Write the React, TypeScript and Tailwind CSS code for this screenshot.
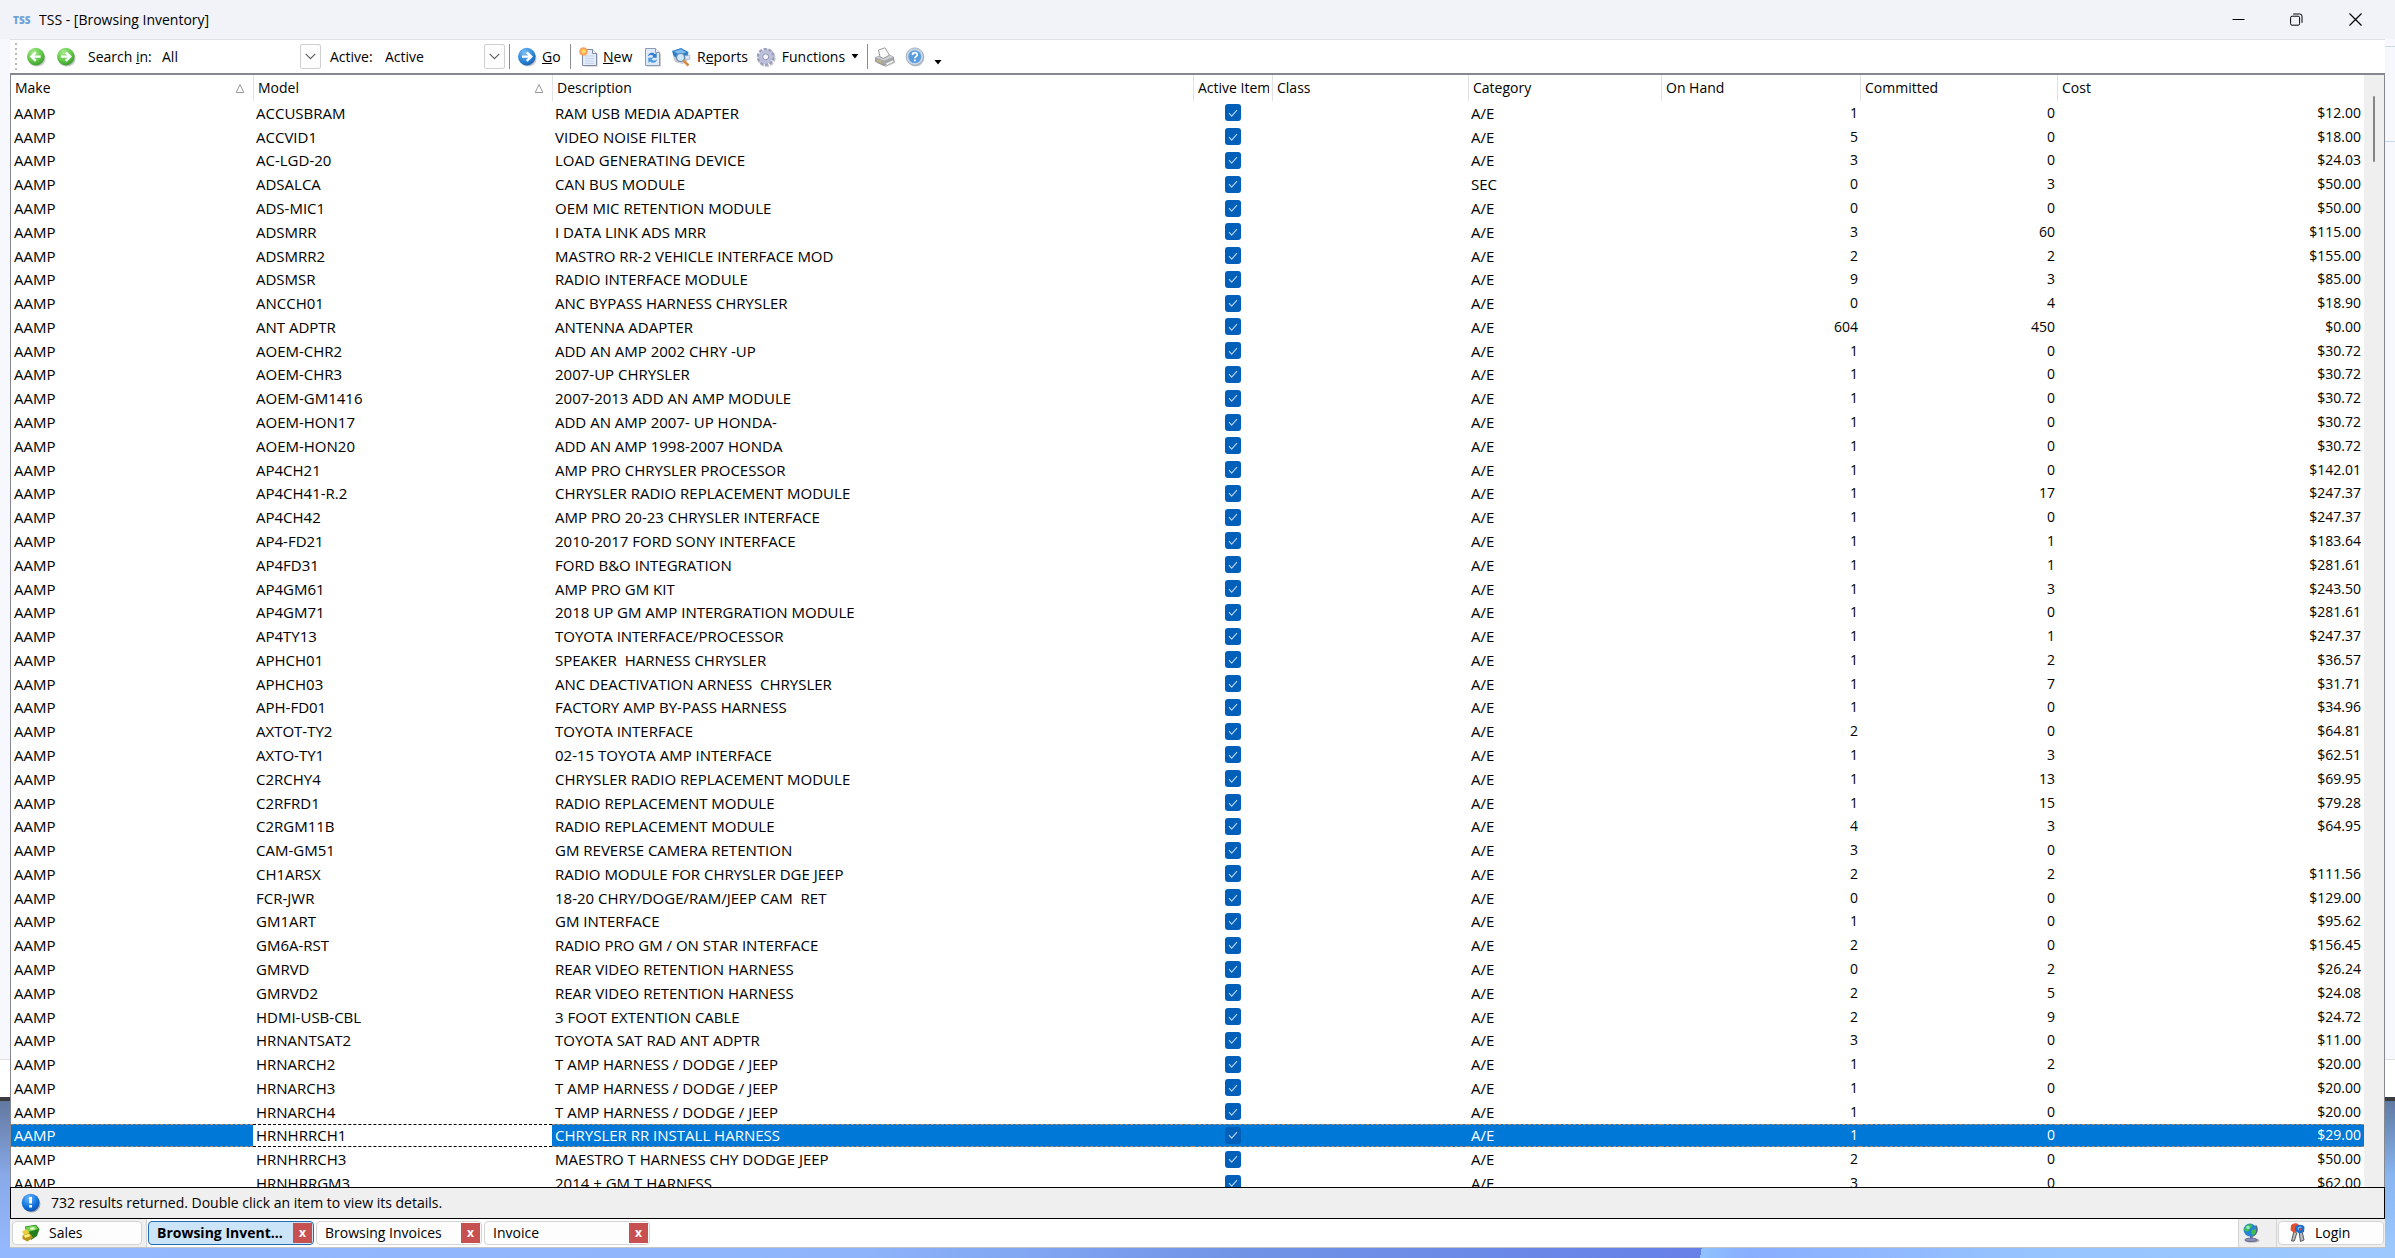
import React from 'react';

type Item = [model: string, description: string, category: string, onHand: string, committed: string, cost: string];

const items: Item[] = [
  ['ACCUSBRAM', 'RAM USB MEDIA ADAPTER', 'A/E', '1', '0', '$12.00'],
  ['ACCVID1', 'VIDEO NOISE FILTER', 'A/E', '5', '0', '$18.00'],
  ['AC-LGD-20', 'LOAD GENERATING DEVICE', 'A/E', '3', '0', '$24.03'],
  ['ADSALCA', 'CAN BUS MODULE', 'SEC', '0', '3', '$50.00'],
  ['ADS-MIC1', 'OEM MIC RETENTION MODULE', 'A/E', '0', '0', '$50.00'],
  ['ADSMRR', 'I DATA LINK ADS MRR', 'A/E', '3', '60', '$115.00'],
  ['ADSMRR2', 'MASTRO RR-2 VEHICLE INTERFACE MOD', 'A/E', '2', '2', '$155.00'],
  ['ADSMSR', 'RADIO INTERFACE MODULE', 'A/E', '9', '3', '$85.00'],
  ['ANCCH01', 'ANC BYPASS HARNESS CHRYSLER', 'A/E', '0', '4', '$18.90'],
  ['ANT ADPTR', 'ANTENNA ADAPTER', 'A/E', '604', '450', '$0.00'],
  ['AOEM-CHR2', 'ADD AN AMP 2002 CHRY -UP', 'A/E', '1', '0', '$30.72'],
  ['AOEM-CHR3', '2007-UP CHRYSLER', 'A/E', '1', '0', '$30.72'],
  ['AOEM-GM1416', '2007-2013 ADD AN AMP MODULE', 'A/E', '1', '0', '$30.72'],
  ['AOEM-HON17', 'ADD AN AMP 2007- UP HONDA-', 'A/E', '1', '0', '$30.72'],
  ['AOEM-HON20', 'ADD AN AMP 1998-2007 HONDA', 'A/E', '1', '0', '$30.72'],
  ['AP4CH21', 'AMP PRO CHRYSLER PROCESSOR', 'A/E', '1', '0', '$142.01'],
  ['AP4CH41-R.2', 'CHRYSLER RADIO REPLACEMENT MODULE', 'A/E', '1', '17', '$247.37'],
  ['AP4CH42', 'AMP PRO 20-23 CHRYSLER INTERFACE', 'A/E', '1', '0', '$247.37'],
  ['AP4-FD21', '2010-2017 FORD SONY INTERFACE', 'A/E', '1', '1', '$183.64'],
  ['AP4FD31', 'FORD B&O INTEGRATION', 'A/E', '1', '1', '$281.61'],
  ['AP4GM61', 'AMP PRO GM KIT', 'A/E', '1', '3', '$243.50'],
  ['AP4GM71', '2018 UP GM AMP INTERGRATION MODULE', 'A/E', '1', '0', '$281.61'],
  ['AP4TY13', 'TOYOTA INTERFACE/PROCESSOR', 'A/E', '1', '1', '$247.37'],
  ['APHCH01', 'SPEAKER  HARNESS CHRYSLER', 'A/E', '1', '2', '$36.57'],
  ['APHCH03', 'ANC DEACTIVATION ARNESS  CHRYSLER', 'A/E', '1', '7', '$31.71'],
  ['APH-FD01', 'FACTORY AMP BY-PASS HARNESS', 'A/E', '1', '0', '$34.96'],
  ['AXTOT-TY2', 'TOYOTA INTERFACE', 'A/E', '2', '0', '$64.81'],
  ['AXTO-TY1', '02-15 TOYOTA AMP INTERFACE', 'A/E', '1', '3', '$62.51'],
  ['C2RCHY4', 'CHRYSLER RADIO REPLACEMENT MODULE', 'A/E', '1', '13', '$69.95'],
  ['C2RFRD1', 'RADIO REPLACEMENT MODULE', 'A/E', '1', '15', '$79.28'],
  ['C2RGM11B', 'RADIO REPLACEMENT MODULE', 'A/E', '4', '3', '$64.95'],
  ['CAM-GM51', 'GM REVERSE CAMERA RETENTION', 'A/E', '3', '0', ''],
  ['CH1ARSX', 'RADIO MODULE FOR CHRYSLER DGE JEEP', 'A/E', '2', '2', '$111.56'],
  ['FCR-JWR', '18-20 CHRY/DOGE/RAM/JEEP CAM  RET', 'A/E', '0', '0', '$129.00'],
  ['GM1ART', 'GM INTERFACE', 'A/E', '1', '0', '$95.62'],
  ['GM6A-RST', 'RADIO PRO GM / ON STAR INTERFACE', 'A/E', '2', '0', '$156.45'],
  ['GMRVD', 'REAR VIDEO RETENTION HARNESS', 'A/E', '0', '2', '$26.24'],
  ['GMRVD2', 'REAR VIDEO RETENTION HARNESS', 'A/E', '2', '5', '$24.08'],
  ['HDMI-USB-CBL', '3 FOOT EXTENTION CABLE', 'A/E', '2', '9', '$24.72'],
  ['HRNANTSAT2', 'TOYOTA SAT RAD ANT ADPTR', 'A/E', '3', '0', '$11.00'],
  ['HRNARCH2', 'T AMP HARNESS / DODGE / JEEP', 'A/E', '1', '2', '$20.00'],
  ['HRNARCH3', 'T AMP HARNESS / DODGE / JEEP', 'A/E', '1', '0', '$20.00'],
  ['HRNARCH4', 'T AMP HARNESS / DODGE / JEEP', 'A/E', '1', '0', '$20.00'],
  ['HRNHRRCH1', 'CHRYSLER RR INSTALL HARNESS', 'A/E', '1', '0', '$29.00'],
  ['HRNHRRCH3', 'MAESTRO T HARNESS CHY DODGE JEEP', 'A/E', '2', '0', '$50.00'],
  ['HRNHRRGM3', '2014 + GM T HARNESS', 'A/E', '3', '0', '$62.00'],
];

const selectedModel = 'HRNHRRCH1';

/* ---------- icons ---------- */

function ArrowOrb({ tone, flip }: { tone: 'green' | 'blue'; flip?: boolean }) {
  const id = 'orb-' + tone + (flip ? '-l' : '-r');
  const light = tone === 'green' ? '#a8ec8e' : '#7cc0f5';
  const mid = tone === 'green' ? '#5cc444' : '#2a86d8';
  const dark = tone === 'green' ? '#3a9a2c' : '#1a5fae';
  return (
    <svg width="20" height="20" viewBox="0 0 20 20" aria-hidden="true">
      <defs>
        <radialGradient id={id} cx="38%" cy="28%" r="75%">
          <stop offset="0" stopColor={light} />
          <stop offset="0.65" stopColor={mid} />
          <stop offset="1" stopColor={dark} />
        </radialGradient>
      </defs>
      <ellipse cx="11" cy="11.4" rx="8.6" ry="8.2" fill="#000" opacity="0.22" />
      <circle cx="9.8" cy="9.6" r="8.8" fill={'url(#' + id + ')'} />
      <path
        d={flip ? 'M14.6 9.6H5.8M9.8 5.4L5.4 9.6l4.4 4.2' : 'M5 9.6h8.8M9.8 5.4l4.4 4.2-4.4 4.2'}
        fill="none"
        stroke="#fff"
        strokeWidth="2.4"
      />
    </svg>
  );
}

function NewIcon() {
  return (
    <svg width="20" height="20" viewBox="0 0 20 20" aria-hidden="true">
      <path d="M5.5 3.5h9l4 4v12h-13z" fill="#000" opacity="0.25" />
      <path d="M3.5 2.5h10l4 4v12h-14z" fill="#e3ecf8" stroke="#7d8ba3" />
      <path d="M13.5 2.5v4h4" fill="#fff" stroke="#7d8ba3" />
      <path d="M6 9h9M6 11.5h9M6 14h9M6 16.3h9" stroke="#c3d3ea" />
      <circle cx="4.5" cy="4.5" r="4.3" fill="#f9a25c" />
      <circle cx="4.5" cy="4.5" r="2.2" fill="#ffd75e" />
    </svg>
  );
}

function RefreshIcon() {
  return (
    <svg width="18" height="20" viewBox="0 0 18 20" aria-hidden="true">
      <path d="M3 3h10l4 4v12.5H3z" fill="#000" opacity="0.22" />
      <path d="M1.5 1.5h10l4 4v13h-14z" fill="#dfe9f8" stroke="#8a9bb8" />
      <path d="M11.5 1.5v4h4" fill="#fff" stroke="#8a9bb8" />
      <path d="M3.8 9.4c.8-3.8 5-4.6 7-2.2l1.9-1.400v5H7.900l1.500-1.700c-1.200-1.500-3.800-1.400-5.600.3z" fill="#2f7ed3" />
      <path d="M13.200 12.200c-.8 3.800-5 4.600-7 2.200l-1.900 1.400v-5h4.800l-1.500 1.700c1.200 1.500 3.800 1.400 5.600-.3z" fill="#4f9be3" />
    </svg>
  );
}

function ReportsIcon() {
  return (
    <svg width="20" height="20" viewBox="0 0 20 20" aria-hidden="true">
      <path d="M2 9.5L16 7l3 4-7 6-8-2z" fill="#8a94a6" opacity="0.5" />
      <path d="M1 4l9-3L17.500 5l-1 5-8 3-6-4z" fill="#2f7fcb" />
      <path d="M3 4.400l7-2.200 5.500 3-7.500 2.400z" fill="#7fbdf0" />
      <path d="M13.500 9l5-1 .5 4-4 1z" fill="#dfe7f2" stroke="#8fa0ba" strokeWidth="0.6" />
      <circle cx="9.500" cy="10.500" r="4" fill="#cfe8fa" stroke="#6b88ab" strokeWidth="1.2" />
      <path d="M12.500 13.500l5 5" stroke="#d98b3f" strokeWidth="2.6" />
    </svg>
  );
}

function GearIcon() {
  return (
    <svg width="20" height="20" viewBox="0 0 20 20" aria-hidden="true">
      <circle cx="10.6" cy="11" r="7" fill="none" stroke="#5d6075" strokeOpacity="0.35" strokeWidth="4.5" strokeDasharray="3.2 1.2" />
      <circle cx="9.8" cy="9.8" r="7.4" fill="none" stroke="#9a9dba" strokeWidth="3.2" strokeDasharray="3.1 1.55" />
      <circle cx="9.8" cy="9.8" r="5" fill="none" stroke="#bdc0da" strokeWidth="4" />
      <circle cx="9.8" cy="9.8" r="3" fill="#f3f4fb" stroke="#8b8fb0" />
    </svg>
  );
}

function PrinterIcon() {
  return (
    <svg width="22" height="20" viewBox="0 0 22 20" aria-hidden="true">
      <path d="M3 13l11-4 7 4v3l-9 4-9-4z" fill="#000" opacity="0.2" />
      <path d="M1.5 10.5L13 7l6.500 3v4L10 18.500l-8.500-4z" fill="#a6a8ab" stroke="#7f8184" strokeWidth="0.7" />
      <path d="M1.5 10.5L13 7l6.500 3L10 13.500z" fill="#cfd0d2" />
      <path d="M6 10L4.500 3 11 .8l4.500 7.400-6 3.200z" fill="#fafafa" stroke="#8f9194" strokeWidth="0.9" />
      <path d="M11 16.500l7.500-3.500 2 1.500-7.500 4z" fill="#f2f2f2" stroke="#8f9194" strokeWidth="0.6" />
      <path d="M3 13.500l4 1.800" stroke="#e3c34c" strokeWidth="1.2" />
    </svg>
  );
}

function HelpIcon() {
  return (
    <svg width="20" height="20" viewBox="0 0 20 20" aria-hidden="true">
      <circle cx="10.8" cy="10.8" r="8.6" fill="#000" opacity="0.2" />
      <circle cx="9.8" cy="9.6" r="8.7" fill="#c9d5e2" stroke="#8fa2b8" strokeWidth="0.8" />
      <circle cx="9.8" cy="9.6" r="6.4" fill="#5a9ee0" />
      <path d="M7.5 7.900c0-3 4.800-3 4.800-.2 0 1.800-2.400 1.700-2.400 3.600M9.900 12.600v1.600" fill="none" stroke="#fff" strokeWidth="1.7" />
    </svg>
  );
}

function InfoIcon() {
  return (
    <svg width="20" height="20" viewBox="0 0 20 20" aria-hidden="true">
      <defs>
        <radialGradient id="info" cx="40%" cy="25%" r="80%">
          <stop offset="0" stopColor="#6db9ff" />
          <stop offset="0.6" stopColor="#1273dc" />
          <stop offset="1" stopColor="#0a4da8" />
        </radialGradient>
      </defs>
      <circle cx="10.8" cy="11" r="8.6" fill="#000" opacity="0.3" />
      <circle cx="9.6" cy="9.6" r="8.9" fill="url(#info)" />
      <path d="M8.2 4h2.800v6.600H8.200zM8.200 12h2.800v2.600H8.200z" fill="#fff" />
    </svg>
  );
}

function SalesIcon() {
  return (
    <svg width="20" height="18" viewBox="0 0 20 18" aria-hidden="true">
      <path d="M4 2.5L15 .8 18.500 5l-2.500 7-6 4-5-8z" fill="#267f1c" />
      <path d="M4.500 3l10-1.600L17.500 5 7 8z" fill="#6fd34c" />
      <ellipse cx="11.500" cy="4.500" rx="2.600" ry="1.500" fill="#d9f7c4" />
      <path d="M1 7.500l5-2.500 2.500 4-5 3z" fill="#e9cf3c" />
      <path d="M1.500 11.500l7-2.500 3.500 4.500-5.500 4-5-2.500z" fill="#b8941a" />
      <path d="M2.500 11.500l5.500-1.700 1.800 2.200-5.300 2z" fill="#f8ea7c" />
    </svg>
  );
}

function GlobeIcon() {
  return (
    <svg width="18" height="20" viewBox="0 0 18 20" aria-hidden="true">
      <ellipse cx="10" cy="17.5" rx="7.5" ry="2" fill="#000" opacity="0.3" />
      <path d="M13.500 2.500c3 4 1 9.500-4.500 11" fill="none" stroke="#5c6478" strokeWidth="1.8" />
      <path d="M8 13h2.500v3H8z" fill="#6c7292" />
      <ellipse cx="9" cy="16.8" rx="6" ry="1.7" fill="#8b90c0" stroke="#50557c" strokeWidth="0.7" />
      <circle cx="8" cy="7" r="6.4" fill="#2384d8" />
      <path d="M3 4.500C5 1 9 .6 10.500 2.500 9.500 5 7.500 5 7 7.500 5 9.500 2.500 8 2 6.500zM10 7l4-1c.5 3-1 5.500-3 6.500-1.500-1.500-2.500-3.500-1-5.500z" fill="#3fc04c" />
      <circle cx="6" cy="4.500" r="1.800" fill="#b7f0ee" opacity="0.8" />
    </svg>
  );
}

function KeysIcon() {
  return (
    <svg width="18" height="20" viewBox="0 0 18 20" aria-hidden="true">
      <path d="M5 8L2.500 18h2.800l2.500-8zM10 8l1.500 10.500 3.500-1.500-2-9z" fill="#b9bbbd" stroke="#55585c" strokeWidth="1" />
      <path d="M2 2.500C4 0 8-.5 10 2l-1 5-4 3-3.500-3z" fill="#e2502f" />
      <path d="M6 4C8.500.8 14 1 15.500 4l-.5 5-4.500 1.500L6 8z" fill="#1e6ccb" />
      <path d="M12.500 4.500c-2-1-4.200.5-3 2.300" fill="none" stroke="#7ec0f5" strokeWidth="1.2" />
      <circle cx="11.500" cy="6.500" r="1.100" fill="#e2502f" />
    </svg>
  );
}

function CaretDown() {
  return (
    <svg width="8" height="5" viewBox="0 0 8 5" aria-hidden="true">
      <path d="M0.500 0h7L4 4.500z" fill="#000" />
    </svg>
  );
}

function SortMark() {
  return (
    <svg width="10" height="11" viewBox="0 0 10 11" aria-hidden="true">
      <path d="M5 1.500l3.800 8H1.200z" fill="none" stroke="#9a9a9a" />
    </svg>
  );
}

/* ---------- title bar ---------- */

function TitleBar() {
  return (
    <header className="flex h-[39px] shrink-0 items-center bg-[#f1f3f9]">
      <span className="w-[39px] pl-[13px] text-[10px] font-extrabold leading-5 text-[#6fa3d8]">TSS</span>
      <h1 className="flex-1 text-[14px] leading-5">TSS - [Browsing Inventory]</h1>
      <div className="flex pr-[10px]">
        <button type="button" aria-label="Minimize" className="flex h-[39px] w-[58px] items-center justify-center">
          <svg width="13" height="13" viewBox="0 0 13 13">
            <path d="M0.500 6.500h12" stroke="#000" />
          </svg>
        </button>
        <button type="button" aria-label="Restore" className="flex h-[39px] w-[58px] items-center justify-center">
          <svg width="13" height="13" viewBox="0 0 13 13" fill="none" stroke="#000">
            <rect x="0.6" y="3.2" width="9" height="9" rx="1.5" />
            <path d="M3.200 1h6.600q2.200 0 2.200 2.200v6.600" />
          </svg>
        </button>
        <button type="button" aria-label="Close" className="flex h-[39px] w-[60px] items-center justify-center">
          <svg width="13" height="13" viewBox="0 0 13 13">
            <path d="M0.500 0.500l12 12M12.500 0.500l-12 12" stroke="#000" strokeWidth="1.2" />
          </svg>
        </button>
      </div>
    </header>
  );
}

/* ---------- toolbar ---------- */

function Separator() {
  return <span className="h-[25px] w-px bg-[#8a8c90]"></span>;
}

function Combo({ id, value, className }: { id: string; value: string; className: string }) {
  return (
    <div className={'relative flex h-[25px] items-center ' + className}>
      <select id={id} className="h-full w-full appearance-none bg-white pl-1 leading-5 outline-none" defaultValue={value}>
        <option>{value}</option>
      </select>
      <span className="pointer-events-none absolute right-0 top-0 flex h-[25px] w-[21px] items-center justify-center rounded-[2px] border border-[#d0d0d0] bg-[#fdfdfd]">
        <svg width="11" height="7" viewBox="0 0 11 7">
          <path d="M0.700 0.800l4.800 4.800 4.800-4.800" fill="none" stroke="#606060" strokeWidth="1.2" />
        </svg>
      </span>
    </div>
  );
}

function Toolbar() {
  return (
    <div className="flex h-[34px] shrink-0 items-center border-t border-[#dfe1e6] bg-white pl-[5px]">
      <span className="mr-[9px] h-[27px] w-[2px] bg-[repeating-linear-gradient(to_bottom,#b8b8b8_0_2px,transparent_2px_5px)]"></span>
      <button type="button" aria-label="Back" className="mr-[10px]"><ArrowOrb tone="green" flip /></button>
      <button type="button" aria-label="Forward" className="mr-3"><ArrowOrb tone="green" /></button>
      <label htmlFor="search-in" className="w-[70px]">Search <u>i</u>n:</label>
      <Combo id="search-in" value="All" className="w-[163px]" />
      <label htmlFor="active" className="ml-[9px] w-[51px]">Active:</label>
      <Combo id="active" value="Active" className="mr-1 w-[124px]" />
      <Separator />
      <button type="button" className="ml-[7px] mr-2 flex w-[45px] items-center gap-[5px]">
        <ArrowOrb tone="blue" /><span><u>G</u>o</span>
      </button>
      <Separator />
      <button type="button" className="ml-2 flex w-[65px] items-center gap-1">
        <NewIcon /><span><u>N</u>ew</span>
      </button>
      <button type="button" aria-label="Refresh" className="mr-[9px]"><RefreshIcon /></button>
      <button type="button" className="flex w-[85px] items-center gap-[6px]">
        <ReportsIcon /><span>R<u>e</u>ports</span>
      </button>
      <button type="button" className="mr-2 flex w-[103px] items-center gap-[6px]">
        <GearIcon /><span>Functions</span><CaretDown />
      </button>
      <Separator />
      <button type="button" aria-label="Print" className="ml-[6px] mr-[9px]"><PrinterIcon /></button>
      <button type="button" aria-label="Help"><HelpIcon /></button>
      <button type="button" aria-label="More" className="ml-[9px] self-end pb-2"><CaretDown /></button>
    </div>
  );
}

/* ---------- grid ---------- */

function ItemRow({ item }: { item: Item }) {
  const [model, description, category, onHand, committed, cost] = item;
  const selected = model === selectedModel;
  const cell = selected
    ? 'border-y border-dashed border-[#a9886a] bg-[#0078d7] text-white'
    : '';
  const modelCell = selected ? 'border-y border-dashed border-black bg-white' : '';

  return (
    <tr className="h-[23px]">
      <td className={'pl-[3px] text-[15px] ' + cell}>AAMP</td>
      <td className={'pl-[3px] text-[15px] ' + modelCell}>{model}</td>
      <td className={'pl-[3px] text-[15px] ' + cell}>{description}</td>
      <td className={cell}>
        <span className="grid h-[17px] place-items-center">
          <input
            type="checkbox"
            defaultChecked
            aria-label={model + ' active'}
            className="col-start-1 row-start-1 h-[17px] w-4 appearance-none rounded-[3px] bg-[#005fb8]"
          />
          <svg width="10" height="10" viewBox="0 0 10 10" className="pointer-events-none col-start-1 row-start-1">
            <path d="M1 5.200l2.700 2.900L9 2.200" fill="none" stroke="#b5d2ee" strokeWidth="1.2" />
          </svg>
        </span>
      </td>
      <td className={cell}></td>
      <td className={'pl-[3px] text-[15px] ' + cell}>{category}</td>
      <td className={'pr-[2px] text-right ' + cell}>{onHand}</td>
      <td className={'pr-[2px] text-right ' + cell}>{committed}</td>
      <td className={'pr-[3px] text-right ' + cell}>{cost}</td>
    </tr>
  );
}

function HeadCell({ title, sorted, first }: { title: string; sorted?: boolean; first?: boolean }) {
  return (
    <th scope="col" className={'h-[26px] overflow-hidden pl-1 pr-2 text-left font-normal ' + (first ? '' : 'border-l border-[#e2e2e2]')}>
      <span className="flex items-center justify-between">
        {title}
        {sorted && <SortMark />}
      </span>
    </th>
  );
}

function Grid() {
  return (
    <main className="flex min-h-0 flex-1 border-x border-t-2 border-[#85888f] bg-white">
      <div className="min-w-0 flex-1 overflow-hidden">
        <table className="h-[1120px] w-full table-fixed border-separate border-spacing-0 whitespace-pre">
          <colgroup>
            <col className="w-[242px]" />
            <col className="w-[299px]" />
            <col className="w-[641px]" />
            <col className="w-[79px]" />
            <col className="w-[196px]" />
            <col className="w-[193px]" />
            <col className="w-[199px]" />
            <col className="w-[197px]" />
            <col />
          </colgroup>
          <thead>
            <tr>
              <HeadCell title="Make" sorted first />
              <HeadCell title="Model" sorted />
              <HeadCell title="Description" />
              <th scope="col" className="border-l border-[#e2e2e2] pl-1 pr-[3px] text-left font-normal">
                <span className="block overflow-hidden">Active Item</span>
              </th>
              <HeadCell title="Class" />
              <HeadCell title="Category" />
              <HeadCell title="On Hand" />
              <HeadCell title="Committed" />
              <HeadCell title="Cost" />
            </tr>
          </thead>
          <tbody>
            {items.map((item) => <ItemRow key={item[0]} item={item} />)}
          </tbody>
        </table>
      </div>
      {/* Scroll track */}
      <div className="flex w-[20px] shrink-0 justify-center bg-[#efefef] pt-[21px]">
        <div className="h-[66px] w-[2px] rounded-full bg-[#868686]"></div>
      </div>
    </main>
  );
}

/* ---------- bottom bars ---------- */

function StatusBar() {
  return (
    <div className="flex h-8 shrink-0 items-center gap-[10px] border border-black bg-[#efefef] pl-[10px]">
      <InfoIcon />
      <p>732 results returned. Double click an item to view its details.</p>
    </div>
  );
}

function WindowTab({ title, active }: { title: string; active?: boolean }) {
  return (
    <div
      className={
        'flex h-6 w-[166px] items-center overflow-hidden rounded-[4px] border ' +
        (active ? 'border-[#1f6fb2] bg-[#cce4f7]' : 'border-[#d4d4d4] bg-[#fdfdfd]')
      }
    >
      <button type="button" className={'flex-1 truncate pl-2 text-left leading-5 ' + (active ? 'font-bold' : '')}>
        {title}
      </button>
      <button type="button" aria-label={'Close ' + title} className="mr-px h-5 w-[19px] bg-[#c75050] text-[12px] font-bold leading-4 text-white">
        x
      </button>
    </div>
  );
}

function TabBar() {
  return (
    <nav className="flex h-[29px] shrink-0 border-b border-[#c4c4c4] bg-[#efefef]">
      <div className="flex items-center pl-[2px] pr-1">
        <button type="button" className="flex h-6 w-[130px] items-center gap-2 rounded-[4px] border border-[#d4d4d4] bg-[#fdfdfd] pl-2">
          <SalesIcon />Sales
        </button>
      </div>
      <div className="flex flex-1 items-center gap-[2px] border-l border-[#d4d4d4] bg-white pl-px">
        <WindowTab title="Browsing Invent..." active />
        <WindowTab title="Browsing Invoices" />
        <WindowTab title="Invoice" />
      </div>
      <div className="flex items-center border-l border-[#d4d4d4]">
        <button type="button" aria-label="Connection" className="pl-[3px] pr-4"><GlobeIcon /></button>
        <div className="flex h-full items-center border-l border-[#d4d4d4] px-px">
          <button type="button" className="flex h-6 w-[106px] items-center gap-2 rounded-[4px] border border-[#d4d4d4] bg-[#fdfdfd] pl-[10px]">
            <KeysIcon />Login
          </button>
        </div>
      </div>
    </nav>
  );
}

/* Windows and wallpaper that peek out at both sides */
function Backdrop({ side }: { side: 'left' | 'right' }) {
  return (
    <div className="flex w-[10px] shrink-0 flex-col">
      <div className="flex flex-1 flex-col bg-[#f7f8fd]">
        {side === 'right' && <div className="mt-[7px] h-[96px] border-y border-[#ccdae8]"></div>}
      </div>
      <div className="h-[38px] border-t border-[#e2e2e2] bg-white"></div>
      <div className="h-1 bg-[#3a3b3f]"></div>
      <div
        className={
          'h-[147px] ' +
          (side === 'left'
            ? 'bg-linear-to-b from-[#62789f] via-[#88a9e8] to-[#95b8fd]'
            : 'bg-linear-to-b from-[#5f7ba3] via-[#88b5ef] to-[#9cc8fe]')
        }
      ></div>
    </div>
  );
}

export default function App() {
  return (
    <div className="flex h-screen flex-col overflow-hidden font-['Open_Sans','Noto_Sans',sans-serif] text-[14px] leading-5 text-black">
      <TitleBar />
      <div className="flex min-h-0 flex-1">
        <Backdrop side="left" />
        <div className="flex min-w-0 flex-1 flex-col">
          <Toolbar />
          <Grid />
          <StatusBar />
          <TabBar />
        </div>
        <Backdrop side="right" />
      </div>
      <div className="h-[10px] shrink-0 bg-[linear-gradient(100deg,#94b8fe_0%,#8eb4fb_36%,#7093e6_52%,#6680e8_71%,#90c2ff_71%,#88aefe_73%,#97c4ff_85%,#9cc8fe_100%)]"></div>
    </div>
  );
}
